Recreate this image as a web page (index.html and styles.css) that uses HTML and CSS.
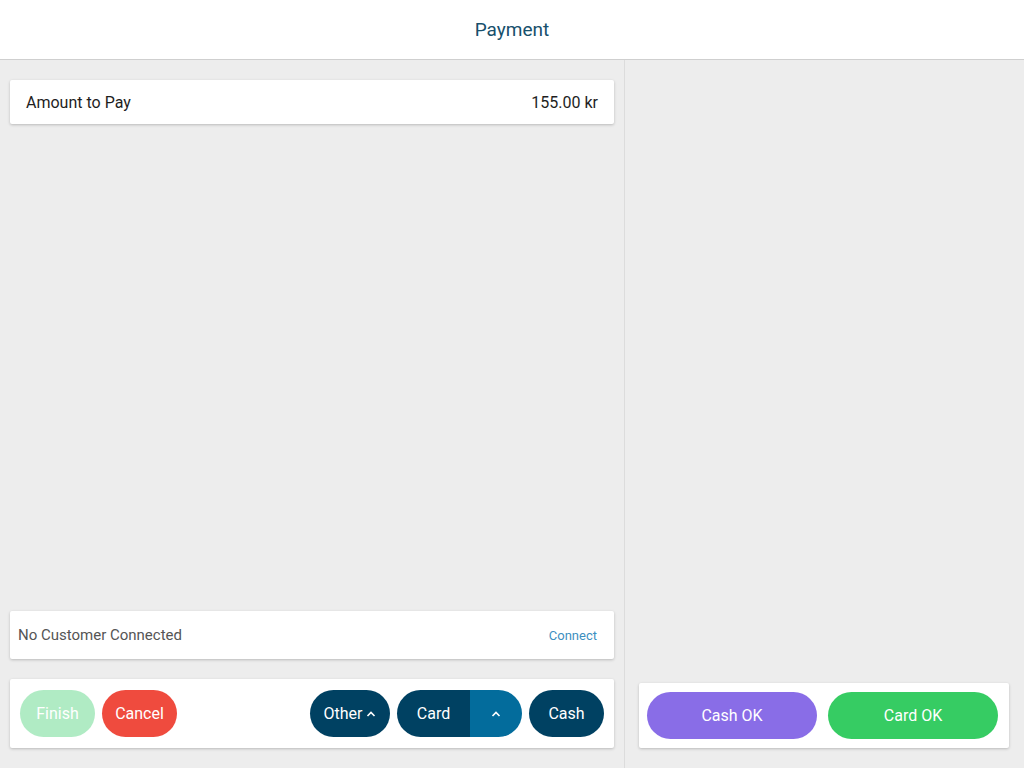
FILE: index.html
```html
<!DOCTYPE html>
<html>
<head>
<meta charset="utf-8">
<link rel="stylesheet" href="styles.css">
</head>
<body>
<header class="topbar"><span class="title">Payment</span></header>
<main class="main">
  <section class="left">
    <div class="card amount">
      <span>Amount to Pay</span>
      <span>155.00 kr</span>
    </div>
    <div class="spacer"></div>
    <div class="card customer">
      <span class="nocust">No Customer Connected</span>
      <span class="connect">Connect</span>
    </div>
    <div class="card actions">
      <div class="group">
        <button class="btn finish">Finish</button>
        <button class="btn cancel">Cancel</button>
      </div>
      <div class="group">
        <button class="btn dark other">Other <svg class="chev" viewBox="0 0 10 6"><path d="M1.5 5L5 1.5 8.5 5" fill="none" stroke="#fff" stroke-width="1.6"/></svg></button>
        <div class="split">
          <button class="btn dark splitmain">Card</button>
          <button class="btn splitarrow"><svg class="chev" viewBox="0 0 10 6"><path d="M1.5 5L5 1.5 8.5 5" fill="none" stroke="#fff" stroke-width="1.6"/></svg></button>
        </div>
        <button class="btn dark cash">Cash</button>
      </div>
    </div>
  </section>
  <section class="right">
    <div class="spacer"></div>
    <div class="card okcard">
      <button class="btn cashok">Cash OK</button>
      <button class="btn cardok">Card OK</button>
    </div>
  </section>
</main>
</body>
</html>
```

FILE: styles.css
```css
* { box-sizing: border-box; }
html, body { margin: 0; height: 100%; }
body {
  font-family: Roboto, "Liberation Sans", sans-serif;
  background: #ededed;
  color: #222;
  display: flex;
  flex-direction: column;
  height: 768px;
  overflow: hidden;
}
.topbar {
  height: 60px;
  background: #fff;
  border-bottom: 1px solid #cfcfcf;
  display: flex;
  align-items: center;
  justify-content: center;
  flex: none;
}
.title { font-size: 19px; color: #17506c; }
.main { flex: 1; display: flex; min-height: 0; }
.left {
  width: 625px;
  border-right: 1px solid #dcdcdc;
  padding: 20px 10px 20px 10px;
  display: flex;
  flex-direction: column;
}
.right {
  flex: 1;
  padding: 0 15px 20px 14px;
  display: flex;
  flex-direction: column;
}
.spacer { flex: 1; }
.card {
  background: #fff;
  border-radius: 2px;
  box-shadow: 0 1px 3px rgba(0,0,0,0.22);
}
.amount {
  height: 44px;
  display: flex;
  align-items: center;
  justify-content: space-between;
  padding: 0 16px;
  font-size: 16px;
  color: #1e1e1e;
}
.customer {
  height: 48px;
  display: flex;
  align-items: center;
  justify-content: space-between;
  padding: 0 17px 0 8px;
  margin-bottom: 20px;
}
.nocust { font-size: 15px; color: #555; }
.connect { font-size: 13px; color: #3d8fbf; }
.actions {
  height: 69px;
  display: flex;
  align-items: center;
  justify-content: space-between;
  padding: 0 10px;
}
.group { display: flex; gap: 7px; }
.btn {
  border: none;
  font-family: inherit;
  font-size: 16px;
  color: #fff;
  height: 47px;
  border-radius: 24px;
  padding: 0;
  display: inline-flex;
  align-items: center;
  justify-content: center;
}
.finish { width: 75px; background: #b0ebc4; }
.cancel { width: 75px; background: #ef4b3e; }
.dark { background: #004162; }
.other { width: 80px; gap: 4px; }
.cash { width: 75px; }
.chev { width: 10px; height: 6px; }
.split { display: flex; }
.splitmain { width: 73px; border-radius: 24px 0 0 24px; }
.splitarrow { width: 52px; background: #036c9c; border-radius: 0 24px 24px 0; }
.okcard {
  height: 65px;
  display: grid;
  grid-template-columns: 170px 170px;
  gap: 11px;
  align-items: center;
  padding: 0 8px;
}
.cashok { background: #896de7; }
.cardok { background: #36cc63; }
```
